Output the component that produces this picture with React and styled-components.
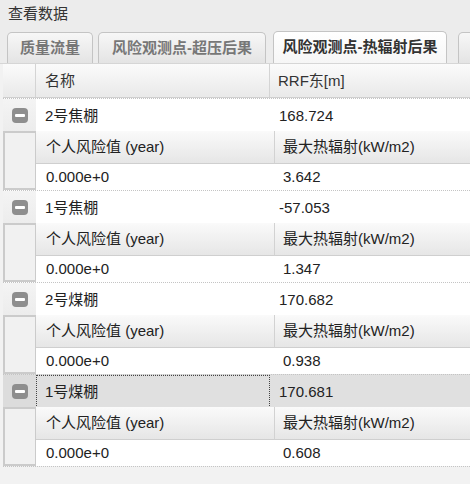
import React from "react";
import styled, { createGlobalStyle } from "styled-components";

const Global = createGlobalStyle`
  body {
    margin: 0;
    background: #ececec;
    font-family: "Liberation Sans", "Noto Sans CJK SC", sans-serif;
    font-size: 15px;
    color: #222;
  }
`;

const Panel = styled.div`
  width: 470px;
  height: 484px;
  overflow: hidden;
  background: #ececec;
`;

const Title = styled.div`
  height: 30px;
  line-height: 28px;
  padding-left: 8px;
  font-size: 15px;
  color: #333;
`;

const TabStrip = styled.div`
  height: 34px;
  display: flex;
  align-items: flex-end;
  padding-left: 7px;
  border-bottom: 1px solid #d6d6d6;
  box-sizing: border-box;
  overflow: hidden;
`;

const Tab = styled.div`
  flex: none;
  width: ${(p) => p.w}px;
  margin-right: ${(p) => p.gap || 0}px;
  height: ${(p) => (p.active ? 32 : 31)}px;
  box-sizing: border-box;
  text-align: center;
  border: 1px solid #c4c4c4;
  border-bottom: none;
  border-radius: 5px 5px 0 0;
  background: ${(p) =>
    p.active
      ? "linear-gradient(#ffffff, #f6f6f6)"
      : "linear-gradient(#f7f7f7, #e4e4e4)"};
  font-weight: bold;
  font-size: 15px;
  line-height: 30px;
  color: ${(p) => (p.active ? "#333" : "#777")};
  white-space: nowrap;
  overflow: hidden;
`;

const Grid = styled.div`
  background: #f2f2f2;
  padding-left: 3px;
  height: 420px;
`;

const HeadRow = styled.div`
  display: grid;
  grid-template-columns: 33px 234px 1fr;
  height: 34px;
  box-sizing: border-box;
  background: linear-gradient(#fbfbfb, #e9e9e9);
  border-bottom: 1px solid #cfcfcf;
  color: #333;
`;

const HeadCell = styled.div`
  border-right: ${(p) => (p.last ? "none" : "1px solid #d4d4d4")};
  padding-left: ${(p) => p.pad || 0}px;
  line-height: 33px;
  white-space: nowrap;
`;

const MasterRow = styled.div`
  display: grid;
  grid-template-columns: 33px 234px 1fr;
  height: 33px;
  box-sizing: border-box;
  background: ${(p) => (p.selected ? "#e0e0e0" : "#fff")};
  border-top: 1px dotted #c4c4c4;
`;

const EndLine = styled.div`
  border-top: 1px dotted #c4c4c4;
`;

const ExpCell = styled.div`
  display: flex;
  align-items: center;
  justify-content: center;
  background: ${(p) => (p.selected ? "#dcdcdc" : "linear-gradient(#f4f4f4, #ececec)")};
`;

const Minus = styled.div`
  width: 16px;
  height: 15px;
  border-radius: 4px;
  background: #8e8e8e;
  display: flex;
  align-items: center;
  justify-content: center;
  &::after {
    content: "";
    width: 10px;
    height: 3px;
    background: #fff;
    border-radius: 1px;
  }
`;

const Cell = styled.div`
  padding-left: ${(p) => p.pad || 8}px;
  line-height: 31px;
  white-space: nowrap;
  box-sizing: border-box;
  border: ${(p) => (p.focus ? "1px dotted #444" : "1px solid transparent")};
  color: #222;
`;

const Detail = styled.div`
  display: grid;
  grid-template-columns: 33px 1fr;
  background: #fff;
`;

const DetailSide = styled.div`
  background: #f1f1f1;
  border: 2px solid #cbcbcb;
  border-right-width: 1px;
`;

const DetailTable = styled.div`
  display: grid;
  grid-template-columns: 239px 1fr;
  grid-template-rows: 33px 26px;
`;

const DHead = styled.div`
  background: linear-gradient(#fafafa, #e6e6e6);
  border-bottom: 1px solid #cfcfcf;
  border-right: ${(p) => (p.first ? "1px solid #d2d2d2" : "none")};
  padding-left: ${(p) => (p.first ? 10 : 8)}px;
  line-height: 32px;
  color: #222;
  white-space: nowrap;
`;

const DValue = styled.div`
  padding-left: ${(p) => (p.first ? 10 : 8)}px;
  line-height: 26px;
  color: #222;
`;

const rows = [
  { name: "2号焦棚", x: "168.724", risk: "0.000e+0", rad: "3.642" },
  { name: "1号焦棚", x: "-57.053", risk: "0.000e+0", rad: "1.347" },
  { name: "2号煤棚", x: "170.682", risk: "0.000e+0", rad: "0.938" },
  { name: "1号煤棚", x: "170.681", risk: "0.000e+0", rad: "0.608", selected: true },
];

export default function App() {
  return (
    <Panel>
      <Global />
      <Title>查看数据</Title>
      <TabStrip>
        <Tab w={86} gap={5}>质量流量</Tab>
        <Tab w={168} gap={7}>风险观测点-超压后果</Tab>
        <Tab w={174} gap={11} active>
          风险观测点-热辐射后果
        </Tab>
        <Tab w={60}>&nbsp;</Tab>
      </TabStrip>
      <Grid>
        <HeadRow>
          <HeadCell />
          <HeadCell pad={9}>名称</HeadCell>
          <HeadCell pad={8} last>
            RRF东[m]
          </HeadCell>
        </HeadRow>
        {rows.map((r, i) => (
          <div key={i}>
            <MasterRow selected={r.selected}>
              <ExpCell selected={r.selected}>
                <Minus />
              </ExpCell>
              <Cell focus={r.selected} pad={8}>
                {r.name}
              </Cell>
              <Cell pad={8}>{r.x}</Cell>
            </MasterRow>
            <Detail>
              <DetailSide />
              <DetailTable>
                <DHead first>个人风险值 (year)</DHead>
                <DHead>最大热辐射(kW/m2)</DHead>
                <DValue first>{r.risk}</DValue>
                <DValue>{r.rad}</DValue>
              </DetailTable>
            </Detail>
          </div>
        ))}
        <EndLine />
      </Grid>
    </Panel>
  );
}
